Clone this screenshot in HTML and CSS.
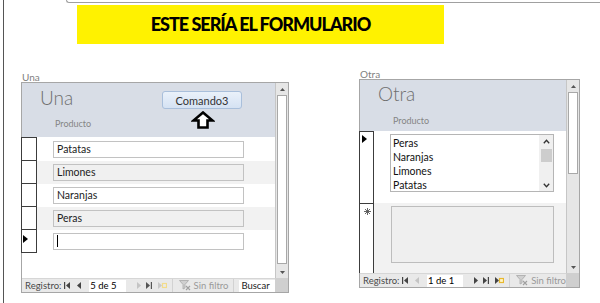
FILE: index.html
```html
<!DOCTYPE html>
<html lang="es">
<head>
<meta charset="utf-8">
<title>Formulario</title>
<link rel="stylesheet" href="styles.css">
</head>
<body>
<div class="page">
  <div class="topedge"></div>
  <div class="banner">ESTE SERÍA EL FORMULARIO</div>
  <div class="forms">
    <div class="formwrap fw-left">
      <div class="caption">Una</div>
      <div class="form form-left">
        <div class="main">
          <div class="header h-left">
            <div class="title">Una</div>
            <button class="cmd">Comando3</button>
            <div class="fieldlabel">Producto</div>
            <svg class="arrow" width="24" height="18" viewBox="0 0 24 18"><path d="M12 1.5 L21.5 9.5 L16.5 9.5 L16.5 16.5 L7.5 16.5 L7.5 9.5 L2.5 9.5 Z" fill="#fff" stroke="#000" stroke-width="2.6" stroke-linejoin="miter"/></svg>
          </div>
          <div class="detail">
            <div class="selcol">
              <div class="sel"></div>
              <div class="sel"></div>
              <div class="sel"></div>
              <div class="sel"></div>
              <div class="sel"><svg class="cur" width="5" height="8" viewBox="0 0 5 8"><path d="M0 0 L5 4 L0 8 Z" fill="#000"/></svg></div>
            </div>
            <div class="rows">
              <div class="row"><div class="tb">Patatas</div></div>
              <div class="row alt"><div class="tb">Limones</div></div>
              <div class="row"><div class="tb">Naranjas</div></div>
              <div class="row alt"><div class="tb">Peras</div></div>
              <div class="row"><div class="tb"><span class="caret"></span></div></div>
            </div>
          </div>
        </div>
        <div class="vscroll">
          <div class="sb-btn"><svg width="5" height="3" viewBox="0 0 5 3"><path d="M0 3 L2.5 0 L5 3 Z" fill="#555"/></svg></div>
          <div class="sb-thumb grow"></div>
          <div class="sb-btn"><svg width="5" height="3" viewBox="0 0 5 3"><path d="M0 0 L2.5 3 L5 0 Z" fill="#555"/></svg></div>
        </div>
        <div class="nav">
          <span class="reg">Registro:</span>
          <svg class="ic ic-first" width="6" height="7" viewBox="0 0 6 7"><rect x="0" y="0" width="1.2" height="7" fill="#444"/><path d="M6 0 L2 3.5 L6 7 Z" fill="#444"/></svg>
          <svg class="ic ic-prev" width="4" height="7" viewBox="0 0 4 7"><path d="M4 0 L0 3.5 L4 7 Z" fill="#444"/></svg>
          <span class="recbox">5 de 5</span>
          <svg class="ic ic-next" width="4" height="7" viewBox="0 0 4 7"><path d="M0 0 L4 3.5 L0 7 Z" fill="#c4c4c4"/></svg>
          <svg class="ic ic-last" width="6" height="7" viewBox="0 0 6 7"><path d="M0 0 L4 3.5 L0 7 Z" fill="#555"/><rect x="4.8" y="0" width="1.2" height="7" fill="#555"/></svg>
          <svg class="ic ic-new" width="9" height="7" viewBox="0 0 9 7"><path d="M0 0 L4 3.5 L0 7 Z" fill="#c8c8c8"/><rect x="4.5" y="1.5" width="4" height="4" fill="none" stroke="#f3dc8a" stroke-width="1.2"/></svg>
          <span class="sep"></span>
          <svg class="ic ic-filter" width="12" height="11" viewBox="0 0 12 11"><path d="M0.5 0.5 L9.5 0.5 L6 4.5 L6 8 L4 9 L4 4.5 Z" fill="#d0d0d0" stroke="#a8a8a8" stroke-width="0.8"/><path d="M7 6 L11 10 M11 6 L7 10" stroke="#a0a0a0" stroke-width="1.1"/></svg>
          <span class="nofilter">Sin filtro</span>
          <span class="sep"></span>
          <span class="search">Buscar</span>
        </div>
        <div class="corner"></div>
      </div>
    </div>

    <div class="formwrap fw-right">
      <div class="caption">Otra</div>
      <div class="form form-right">
        <div class="main">
          <div class="header h-right">
            <div class="title">Otra</div>
            <div class="fieldlabel">Producto</div>
          </div>
          <div class="detail">
            <div class="selcol">
              <div class="sel sel-big"><svg class="cur" width="5" height="8" viewBox="0 0 5 8"><path d="M0 0 L5 4 L0 8 Z" fill="#000"/></svg></div>
              <div class="sel sel-new"><svg class="star" width="7" height="7" viewBox="0 0 7 7"><path d="M3.5 0 V7 M0 3.5 H7 M1 1 L6 6 M6 1 L1 6" stroke="#555" stroke-width="0.9"/></svg></div>
            </div>
            <div class="rows">
              <div class="row row-big">
                <div class="listbox">
                  <div class="items">
                    <div>Peras</div>
                    <div>Naranjas</div>
                    <div>Limones</div>
                    <div>Patatas</div>
                  </div>
                  <div class="lb-scroll">
                    <svg class="chev" width="7" height="5" viewBox="0 0 7 5"><path d="M0.8 4.2 L3.5 1.2 L6.2 4.2" fill="none" stroke="#333" stroke-width="1.3"/></svg>
                    <div class="lb-thumb"></div>
                    <div class="grow"></div>
                    <svg class="chev" width="7" height="5" viewBox="0 0 7 5"><path d="M0.8 0.8 L3.5 3.8 L6.2 0.8" fill="none" stroke="#333" stroke-width="1.3"/></svg>
                  </div>
                </div>
              </div>
              <div class="row row-new alt">
                <div class="emptybox"></div>
              </div>
            </div>
          </div>
        </div>
        <div class="vscroll">
          <div class="sb-btn"><svg width="5" height="3" viewBox="0 0 5 3"><path d="M0 3 L2.5 0 L5 3 Z" fill="#555"/></svg></div>
          <div class="sb-thumb fixed"></div>
          <div class="grow"></div>
          <div class="sb-btn"><svg width="5" height="3" viewBox="0 0 5 3"><path d="M0 0 L2.5 3 L5 0 Z" fill="#555"/></svg></div>
        </div>
        <div class="nav">
          <span class="reg">Registro:</span>
          <svg class="ic ic-first" width="6" height="7" viewBox="0 0 6 7"><rect x="0" y="0" width="1.2" height="7" fill="#444"/><path d="M6 0 L2 3.5 L6 7 Z" fill="#444"/></svg>
          <svg class="ic ic-prev" width="4" height="7" viewBox="0 0 4 7"><path d="M4 0 L0 3.5 L4 7 Z" fill="#c4c4c4"/></svg>
          <span class="recbox">1 de 1</span>
          <svg class="ic ic-next" width="4" height="7" viewBox="0 0 4 7"><path d="M0 0 L4 3.5 L0 7 Z" fill="#444"/></svg>
          <svg class="ic ic-last" width="6" height="7" viewBox="0 0 6 7"><path d="M0 0 L4 3.5 L0 7 Z" fill="#444"/><rect x="4.8" y="0" width="1.2" height="7" fill="#444"/></svg>
          <svg class="ic ic-new" width="9" height="7" viewBox="0 0 9 7"><path d="M0 0 L4 3.5 L0 7 Z" fill="#444"/><rect x="4.5" y="1.5" width="4" height="4" fill="#fff6c8" stroke="#e8b830" stroke-width="1.2"/></svg>
          <span class="sep"></span>
          <svg class="ic ic-filter" width="12" height="11" viewBox="0 0 12 11"><path d="M0.5 0.5 L9.5 0.5 L6 4.5 L6 8 L4 9 L4 4.5 Z" fill="#d0d0d0" stroke="#a8a8a8" stroke-width="0.8"/><path d="M7 6 L11 10 M11 6 L7 10" stroke="#a0a0a0" stroke-width="1.1"/></svg>
          <span class="nofilter">Sin filtro</span>
        </div>
        <div class="corner"></div>
      </div>
    </div>
  </div>
</div>
</body>
</html>
```
FILE: styles.css
```css
* { box-sizing: border-box; }

body {
  margin: 0;
  background: #fff;
  font-family: Lato, "Open Sans", "Liberation Sans", sans-serif;
  color: #222;
}

.page {
  margin-left: 3px;
  width: 597px;
  height: 303px;
  border-left: 1px solid #555;
  overflow: hidden;
}

.topedge {
  margin-left: 62px;
  height: 3px;
  border-left: 1px solid #a0a0a0;
  border-bottom: 1px solid #a0a0a0;
  border-bottom-left-radius: 4px;
}

.banner {
  margin: 2px 0 0 73px;
  width: 367px;
  height: 39px;
  background: #fff200;
  color: #000;
  font-weight: 900;
  font-size: 18px;
  letter-spacing: -1px;
  line-height: 39px;
  text-align: center;
}

.forms {
  display: flex;
  align-items: flex-start;
}

.fw-left { margin: 28px 0 0 17px; }
.fw-right { margin: 25px 0 0 70px; }

.caption {
  height: 10px;
  padding-left: 1px;
  font-size: 10px;
  line-height: 10px;
  color: #7f7f7f;
}

.form {
  display: grid;
  grid-template-columns: 1fr 13px;
  grid-template-rows: 1fr 14px;
  border: 1px solid #a6a6a6;
  background: #fff;
}
.form-left { width: 268px; height: 211px; }
.form-right { width: 221px; height: 209px; }

.main {
  display: flex;
  flex-direction: column;
  min-height: 0;
}

.header {
  background: #d8dde6;
  display: grid;
  padding-left: 18px;
}
.h-left {
  height: 54px;
  grid-template-columns: 122px 80px;
  grid-template-rows: 23px 1fr;
  padding-top: 5px;
}
.h-right {
  height: 51px;
  grid-template-columns: 1fr;
  grid-template-rows: 24px 1fr;
  padding-top: 4px;
}

.title {
  font-weight: 300;
  font-size: 19px;
  line-height: 20px;
  color: #6f6f6f;
}

.fieldlabel {
  margin: 7px 0 0 15px;
  font-size: 9px;
  line-height: 12px;
  color: #858585;
}

.cmd {
  margin-top: 3px;
  width: 80px;
  height: 18px;
  padding: 0;
  border: 1px solid #a9bfdb;
  border-radius: 3px;
  background: linear-gradient(#eaf1fa, #d5e2f3);
  font-family: inherit;
  font-size: 11px;
  color: #333;
  text-align: center;
}

.arrow {
  justify-self: center;
  margin-left: 1px;
}

.detail {
  display: flex;
  flex: 1;
}

.selcol {
  width: 16px;
  margin-left: -1px;
  border-left: 1px solid #3c3c3c;
  border-right: 1px solid #3c3c3c;
  border-top: 1px solid #3c3c3c;
  display: flex;
  flex-direction: column;
  align-self: flex-start;
}
.form-right .selcol { width: 15px; align-self: stretch; }

.sel {
  height: 23px;
  border-bottom: 1px solid #3c3c3c;
}
.sel-big { height: 72px; }
.sel-new { flex: 1; border-bottom: none; }

.cur {
  display: block;
  margin: 5px 0 0 1px;
}
.sel-big .cur { margin: 3px 0 0 2px; }
.star { display: block; margin: 4px 0 0 4px; }

.rows {
  flex: 1;
  display: flex;
  flex-direction: column;
  padding-top: 1px;
}
.form-right .rows { padding-top: 0; }

.row {
  height: 23px;
  padding: 3px 0 0 16px;
}
.row.alt { background: #f2f2f2; }

.tb {
  width: 191px;
  height: 17px;
  border: 1px solid #c2c2c2;
  background: #fff;
  padding-left: 3px;
  font-size: 10.5px;
  line-height: 15px;
  color: #222;
}
.row.alt .tb { background: #f0f0f0; }

.caret {
  display: inline-block;
  width: 1px;
  height: 12px;
  margin-top: 1px;
  background: #000;
  vertical-align: top;
}

.row-big {
  height: 72px;
  padding: 3px 0 0 16px;
}
.row-new {
  flex: 1;
  padding: 3px 0 0 17px;
}

.listbox {
  width: 164px;
  height: 58px;
  border: 1px solid #b5b5b5;
  background: #fff;
  display: flex;
}
.items {
  flex: 1;
  padding: 1px 0 0 2px;
  font-size: 10.5px;
  line-height: 14px;
  color: #111;
}
.lb-scroll {
  width: 14px;
  background: #f0f0f0;
  display: flex;
  flex-direction: column;
  align-items: center;
  padding: 4px 1px 3px;
}
.lb-thumb {
  width: 11px;
  height: 13px;
  margin-top: 5px;
  background: #cdcdcd;
}
.chev { display: block; }

.emptybox {
  width: 163px;
  height: 57px;
  border: 1px solid #bdbdbd;
  background: #efefef;
}

.vscroll {
  grid-row: 1;
  grid-column: 2;
  border-left: 1px solid #c6c6c6;
  background: #e6e6e6;
  display: flex;
  flex-direction: column;
  padding: 0 1px;
}
.sb-btn {
  height: 12px;
  display: flex;
  align-items: center;
  justify-content: center;
}
.sb-thumb {
  background: #fff;
  border: 1px solid #a8a8a8;
}
.sb-thumb.grow { flex: 1; margin-bottom: 2px; }
.sb-thumb.fixed { height: 82px; }
.grow { flex: 1; }

.nav {
  grid-row: 2;
  grid-column: 1;
  display: flex;
  align-items: center;
  background: #e9e9e9;
  border-top: 1px solid #d6d6d6;
  font-size: 9.5px;
  color: #4a4a4a;
  white-space: nowrap;
  overflow: hidden;
}
.corner {
  grid-row: 2;
  grid-column: 2;
  background: #cfcfcf;
}

.reg { width: 45px; padding-left: 3px; }
.ic { display: block; flex: none; }
.ic-prev { margin-left: 7px; }
.recbox {
  margin-left: 8px;
  width: 39px;
  height: 12px;
  background: #fff;
  color: #000;
  line-height: 12px;
  padding-left: 1px;
}
.ic-next { margin-left: 11px; }
.ic-last { margin-left: 5px; }
.ic-new { margin-left: 6px; }
.sep {
  width: 1px;
  height: 13px;
  margin-left: 5px;
  background: #d2d2d2;
}
.ic-filter { margin-left: 6px; }
.nofilter { margin-left: 3px; color: #9a9a9a; }
.search {
  margin-left: 5px;
  width: 38px;
  height: 12px;
  background: #fff;
  color: #222;
  line-height: 12px;
  padding-left: 2px;
}
```
